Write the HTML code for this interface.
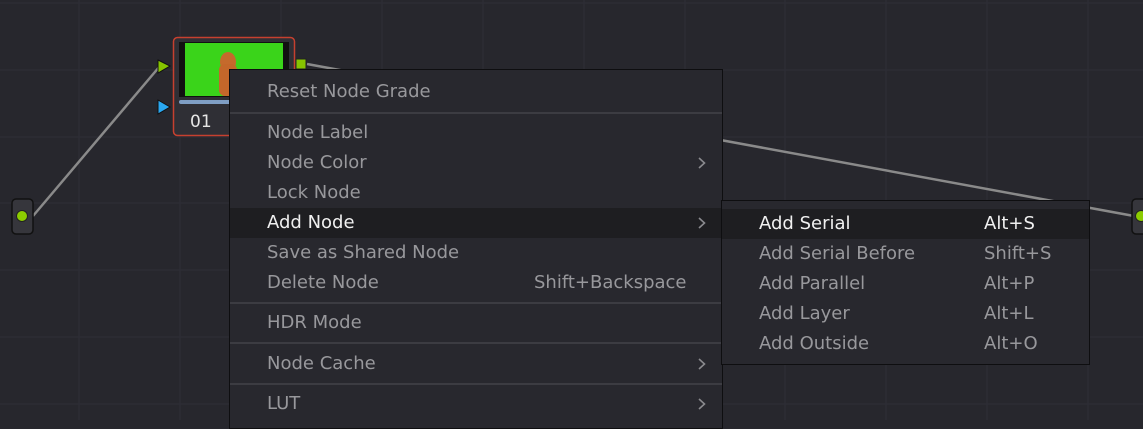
<!DOCTYPE html>
<html><head><style>
body{margin:0;width:1143px;height:420px;overflow:hidden;background:#27272d;position:relative;font-family:"DejaVu Sans","Liberation Sans",sans-serif;}
.abs{position:absolute}
.menu{position:absolute;background:#28282e;border:1px solid #0e0e10;box-sizing:border-box}
.it{position:absolute;left:0;right:0;height:30px;line-height:30px;font-size:18px;color:#98989c;white-space:nowrap}
.it .t{position:absolute;left:37px}
.it .s{position:absolute}
.hl{background:#1e1e21;color:#f0f0f0}
.sep{position:absolute;left:0;right:0;height:2px;background:#3c3c42}
.arr{position:absolute;left:468px;top:9px;width:8px;height:12px}
</style></head><body>
<svg class="abs" style="left:0;top:0" width="1143" height="420">
<g stroke="#2d2d34" stroke-width="1.5">
<line x1="79" y1="0" x2="79" y2="420"/><line x1="180" y1="0" x2="180" y2="420"/><line x1="281" y1="0" x2="281" y2="420"/><line x1="382" y1="0" x2="382" y2="420"/><line x1="483" y1="0" x2="483" y2="420"/><line x1="584" y1="0" x2="584" y2="420"/><line x1="685" y1="0" x2="685" y2="420"/><line x1="785" y1="0" x2="785" y2="420"/><line x1="886" y1="0" x2="886" y2="420"/><line x1="987" y1="0" x2="987" y2="420"/><line x1="1088" y1="0" x2="1088" y2="420"/>
<line x1="0" y1="3" x2="1143" y2="3"/><line x1="0" y1="70" x2="1143" y2="70"/><line x1="0" y1="137" x2="1143" y2="137"/><line x1="0" y1="203" x2="1143" y2="203"/><line x1="0" y1="270" x2="1143" y2="270"/><line x1="0" y1="337" x2="1143" y2="337"/><line x1="0" y1="404" x2="1143" y2="404"/>
</g>
<g stroke="#8a8a8a" stroke-width="2.5">
<line x1="33" y1="216" x2="160" y2="66"/>
<line x1="307" y1="64" x2="1134" y2="216"/>
</g>
<rect x="12" y="199" width="21" height="35" rx="4" fill="#36363c" stroke="#111" stroke-width="1.5"/>
<circle cx="22" cy="216" r="5.5" fill="#8ccc00" stroke="#222"/>
<rect x="1132" y="199" width="21" height="35" rx="4" fill="#36363c" stroke="#111" stroke-width="1.5"/>
<circle cx="1141" cy="216" r="5.5" fill="#8ccc00" stroke="#222"/>
<rect x="173.5" y="37.5" width="121" height="98" rx="4" fill="#2f2f35" stroke="#c6402f" stroke-width="1.5"/>
<rect x="179" y="42" width="110" height="55" fill="#111"/>
<rect x="185" y="43" width="98" height="53" fill="#3ad41a"/>
<ellipse cx="228" cy="62" rx="8" ry="10" fill="#c56a2c"/>
<rect x="219" y="64" width="18" height="32" rx="6" fill="#c4672a"/>
<rect x="179" y="100" width="110" height="4" rx="2" fill="#7f9ec4"/>
<text x="190" y="127" font-family="DejaVu Sans" font-size="17" fill="#e6e6e6">01</text>
<polygon points="158,60 170,66 158,73" fill="#86c400" stroke="#111"/>
<polygon points="158,100 170,107 158,114" fill="#2aa7f0" stroke="#111"/>
<rect x="296" y="59" width="10" height="10" fill="#86c400" stroke="#222"/>
</svg>
<div class="menu" style="left:229px;top:69px;width:494px;height:360px">
<div class="it" style="top:7px"><span class="t">Reset Node Grade</span></div>
<div class="sep" style="top:42px"></div>
<div class="it" style="top:48px"><span class="t">Node Label</span></div>
<div class="it" style="top:78px"><span class="t">Node Color</span><svg class="arr" viewBox="0 0 8 12"><path d="M1 1L6.5 6L1 11" fill="none" stroke="#8a8a8e" stroke-width="1.6"/></svg></div>
<div class="it" style="top:108px"><span class="t">Lock Node</span></div>
<div class="it hl" style="top:138px"><span class="t">Add Node</span><svg class="arr" viewBox="0 0 8 12"><path d="M1 1L6.5 6L1 11" fill="none" stroke="#8a8a8e" stroke-width="1.6"/></svg></div>
<div class="it" style="top:168px"><span class="t">Save as Shared Node</span></div>
<div class="it" style="top:198px"><span class="t">Delete Node</span><span class="s" style="left:304px">Shift+Backspace</span></div>
<div class="sep" style="top:232px"></div>
<div class="it" style="top:238px"><span class="t">HDR Mode</span></div>
<div class="sep" style="top:272px"></div>
<div class="it" style="top:279px"><span class="t">Node Cache</span><svg class="arr" viewBox="0 0 8 12"><path d="M1 1L6.5 6L1 11" fill="none" stroke="#8a8a8e" stroke-width="1.6"/></svg></div>
<div class="sep" style="top:313px"></div>
<div class="it" style="top:319px"><span class="t">LUT</span><svg class="arr" viewBox="0 0 8 12"><path d="M1 1L6.5 6L1 11" fill="none" stroke="#8a8a8e" stroke-width="1.6"/></svg></div>
</div>
<div class="menu" style="left:721px;top:200px;width:369px;height:165px">
<div class="it hl" style="top:8px"><span class="t">Add Serial</span><span class="s" style="left:262px">Alt+S</span></div>
<div class="it" style="top:38px"><span class="t">Add Serial Before</span><span class="s" style="left:262px">Shift+S</span></div>
<div class="it" style="top:68px"><span class="t">Add Parallel</span><span class="s" style="left:262px">Alt+P</span></div>
<div class="it" style="top:98px"><span class="t">Add Layer</span><span class="s" style="left:262px">Alt+L</span></div>
<div class="it" style="top:128px"><span class="t">Add Outside</span><span class="s" style="left:262px">Alt+O</span></div>
</div>
</body></html>
